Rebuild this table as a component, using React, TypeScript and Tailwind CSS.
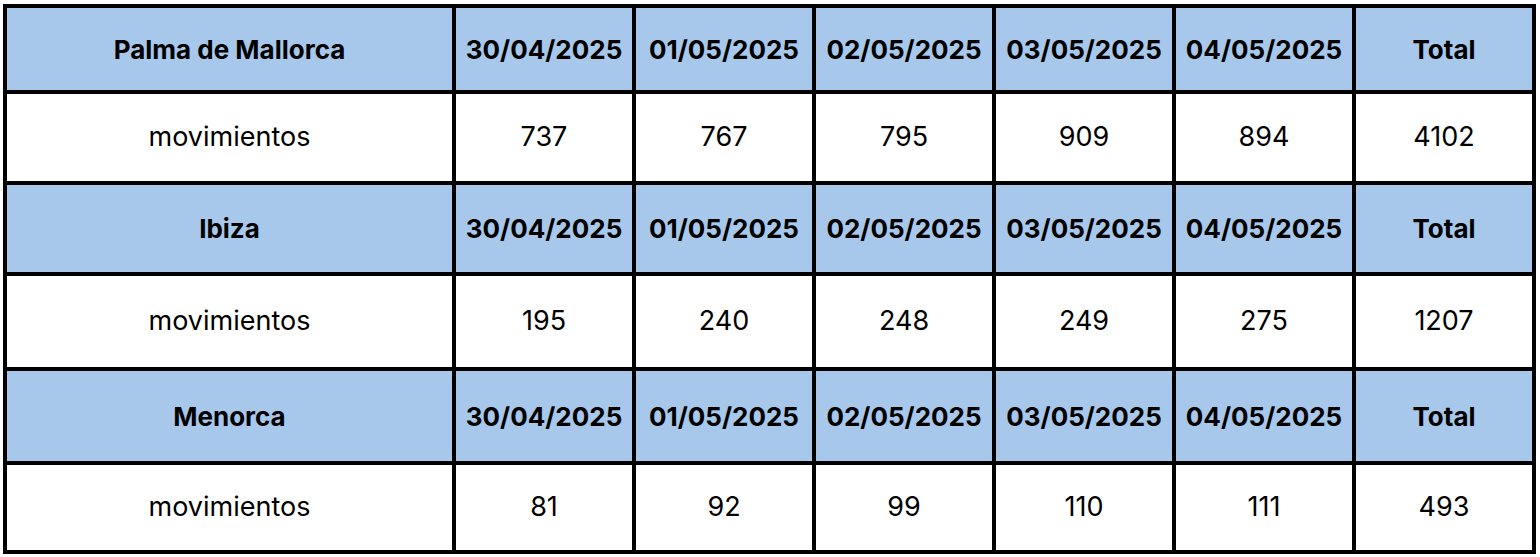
import { Fragment } from 'react';

const dates = ['30/04/2025', '01/05/2025', '02/05/2025', '03/05/2025', '04/05/2025'];

interface Airport {
  name: string;
  values: number[];
  total: number;
  headH: string;
  rowH: string;
}

const airports: Airport[] = [
  { name: 'Palma de Mallorca', values: [737, 767, 795, 909, 894], total: 4102, headH: 'h-[82px]', rowH: 'h-[87px]' },
  { name: 'Ibiza', values: [195, 240, 248, 249, 275], total: 1207, headH: 'h-[87px]', rowH: 'h-[91px]' },
  { name: 'Menorca', values: [81, 92, 99, 110, 111], total: 493, headH: 'h-[90px]', rowH: 'h-[85px]' },
];

function HeadCell({ children, h }: { children: React.ReactNode; h: string }) {
  return (
    <div className={`${h} bg-[#a7c8eb] flex items-center justify-center font-bold text-[26px]`}>
      {children}
    </div>
  );
}

function Cell({ children, h }: { children: React.ReactNode; h: string }) {
  return (
    <div className={`${h} bg-white flex items-center justify-center text-[27px]`}>
      {children}
    </div>
  );
}

export default function App() {
  return (
    <div className="w-[1540px] h-[557px] bg-white pl-[3px] pt-[4px]">
      <div
        className="w-[1533px] bg-black p-[4px] grid grid-cols-[445px_repeat(6,176px)] gap-[4px] text-black"
        style={{ fontFamily: 'Inter, "Liberation Sans", sans-serif' }}
      >
        {airports.map((a) => (
          <Fragment key={a.name}>
            <HeadCell h={a.headH}>{a.name}</HeadCell>
            {dates.map((d) => (
              <HeadCell key={d} h={a.headH}>{d}</HeadCell>
            ))}
            <HeadCell h={a.headH}>Total</HeadCell>

            <Cell h={a.rowH}>movimientos</Cell>
            {a.values.map((v, i) => (
              <Cell key={i} h={a.rowH}>{v}</Cell>
            ))}
            <Cell h={a.rowH}>{a.total}</Cell>
          </Fragment>
        ))}
      </div>
    </div>
  );
}
